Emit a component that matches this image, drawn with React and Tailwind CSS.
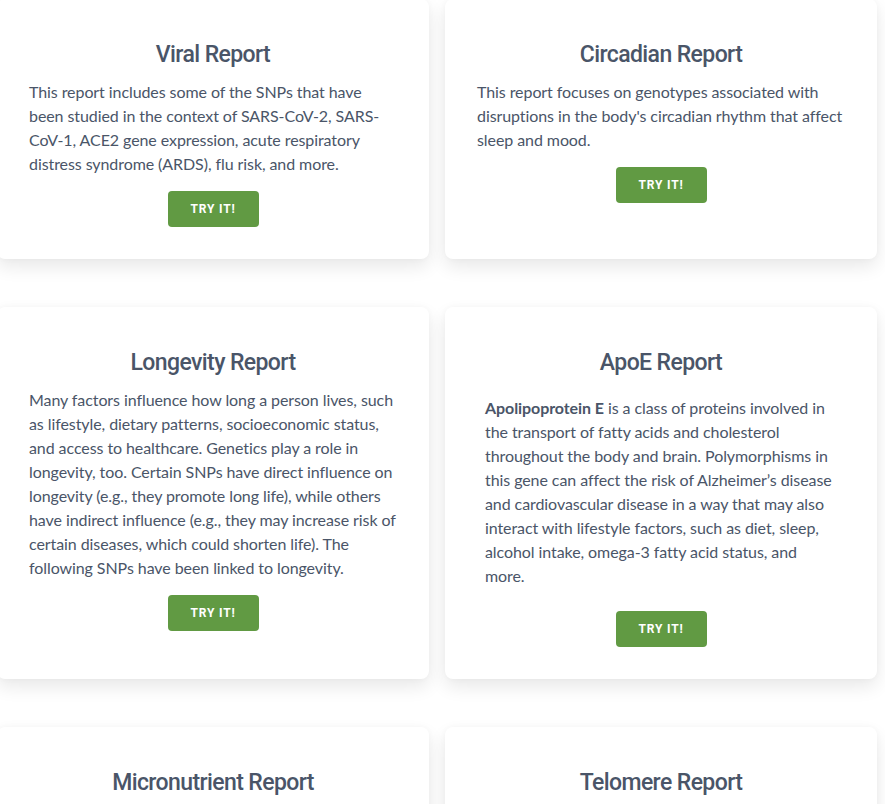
import React from "react";

const cards = [
  {
    title: "Viral Report",
    body: (
      <>This report includes some of the SNPs that have been studied in the context of SARS-CoV-2, SARS-CoV-1, ACE2 gene expression, acute respiratory distress syndrome (ARDS), flu risk, and more.</>
    ),
  },
  {
    title: "Circadian Report",
    body: (
      <>This report focuses on genotypes associated with disruptions in the body's circadian rhythm that affect sleep and mood.</>
    ),
  },
  {
    title: "Longevity Report",
    body: (
      <>Many factors influence how long a person lives, such as lifestyle, dietary patterns, socioeconomic status, and access to healthcare. Genetics play a role in longevity, too. Certain SNPs have direct influence on longevity (e.g., they promote long life), while others have indirect influence (e.g., they may increase risk of certain diseases, which could shorten life). The following SNPs have been linked to longevity.</>
    ),
  },
  {
    title: "ApoE Report",
    extra: true,
    body: (
      <><strong className="font-bold">Apolipoprotein E</strong> is a class of proteins involved in the transport of fatty acids and cholesterol throughout the body and brain. Polymorphisms in this gene can affect the risk of Alzheimer’s disease and cardiovascular disease in a way that may also interact with lifestyle factors, such as diet, sleep, alcohol intake, omega-3 fatty acid status, and more.</>
    ),
  },
  { title: "Micronutrient Report", body: <>This report includes SNPs related to the absorption and metabolism of vitamins and minerals.</> },
  { title: "Telomere Report", body: <>This report includes SNPs associated with telomere length.</> },
];

function Card({ title, body, extra }) {
  return (
    <div className="bg-white rounded-lg shadow-[0_8px_18px_rgba(0,0,0,0.09),0_0_6px_rgba(0,0,0,0.03)] px-8 pt-[40px] pb-8 flex flex-col items-stretch">
      <h2 className="text-center text-[23px] leading-8 font-medium text-[#4a5568] tracking-[-0.6px] font-['Roboto',sans-serif]">
        {title}
      </h2>
      <p className={`text-[16px] leading-6 tracking-[-0.08px] text-[#4a5568] font-['Lato',sans-serif] ${extra ? "mt-[17px] mx-2 mb-2" : "mt-[9px]"}`}>
        {body}
      </p>
      <div className="flex justify-center mt-[15px]">
        <button className="w-[91px] h-9 rounded-[4px] bg-[#619a43] text-white text-[12px] font-bold tracking-[0.8px] font-['Roboto',sans-serif]">
          TRY IT!
        </button>
      </div>
    </div>
  );
}

export default function App() {
  return (
    <div className="bg-white min-h-screen overflow-hidden">
      <div className="ml-[-3px] mt-[-1px] grid grid-cols-[432px_432px] gap-x-4 gap-y-12">
        {cards.map((c) => (
          <Card key={c.title} {...c} />
        ))}
      </div>
    </div>
  );
}
